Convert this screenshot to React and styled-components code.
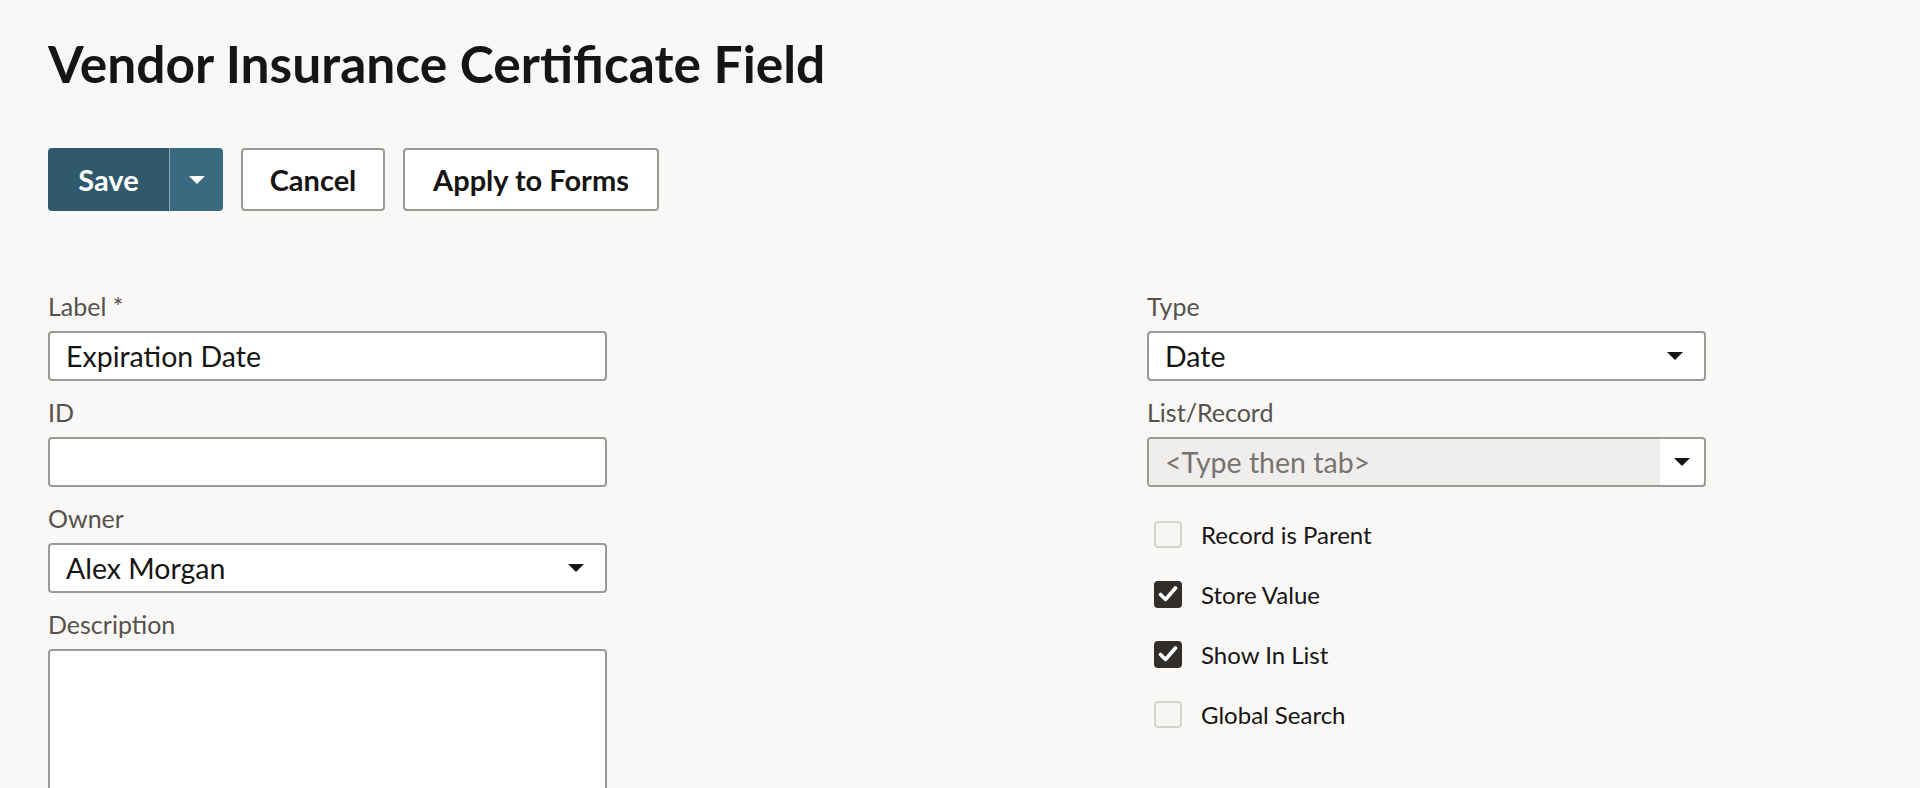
import React from 'react';
import styled, { createGlobalStyle } from 'styled-components';

const GlobalStyle = createGlobalStyle`
  body {
    margin: 0;
    background: #f9f8f6;
    font-family: Lato, "Noto Sans", sans-serif;
    color: #161513;
  }
`;

const Page = styled.div`
  padding: 33px 48px 0;
  height: 755px;
  overflow: hidden;
`;

const Title = styled.h1`
  margin: 0;
  font-size: 51.5px;
  line-height: 60px;
  font-weight: 700;
  color: #161513;
`;

const Toolbar = styled.div`
  display: flex;
  gap: 18px;
  margin-top: 55px;
`;

const SplitButton = styled.div`
  display: flex;
  height: 63px;
  border-radius: 4px;
  overflow: hidden;
`;

const PrimaryButton = styled.button`
  width: 121px;
  border: none;
  background: #305a6b;
  color: #ffffff;
  font-family: inherit;
  font-size: 29px;
  font-weight: 700;
  padding: 0;
  cursor: pointer;
`;

const MenuButton = styled.button`
  width: 54px;
  border: none;
  border-left: 1px solid #8aa5b1;
  background: #3a6a80;
  display: flex;
  align-items: center;
  justify-content: center;
  cursor: pointer;
`;

const Button = styled.button`
  width: ${p => p.$width}px;
  height: 63px;
  padding: 0;
  background: #ffffff;
  border: 2px solid #9d9a96;
  border-radius: 4px;
  font-family: inherit;
  font-size: 29px;
  font-weight: 700;
  color: #161513;
  cursor: pointer;
`;

const Form = styled.div`
  display: grid;
  grid-template-columns: 1099px 559px;
  margin-top: 80px;
`;

const Column = styled.div`
  display: flex;
  flex-direction: column;
  gap: 16px;
  width: 559px;
`;

const Field = styled.div`
  display: flex;
  flex-direction: column;
  gap: 10px;
`;

const Label = styled.label`
  font-size: 25px;
  line-height: 30px;
  color: #55524e;
`;

const Box = styled.div`
  box-sizing: border-box;
  height: ${p => p.$tall ? '160px' : '50px'};
  display: flex;
  align-items: center;
  background: #ffffff;
  border: 2px solid #9d9a96;
  border-radius: 4px;
  overflow: hidden;
`;

const Value = styled.div`
  flex: 1;
  align-self: stretch;
  display: flex;
  align-items: center;
  padding: 0 16px;
  font-size: 28.5px;
  color: ${p => p.$placeholder ? '#77736e' : '#161513'};
  background: ${p => p.$disabled ? '#efeeec' : 'transparent'};
`;

const Caret = styled.span`
  width: ${p => p.$wide ? '44px' : '58px'};
  display: flex;
  align-items: center;
  justify-content: center;
`;

const Checks = styled.div`
  display: flex;
  flex-direction: column;
  padding-left: 7px;
  margin-top: 1px;
`;

const CheckRow = styled.label`
  display: flex;
  align-items: center;
  gap: 19px;
  height: 60px;
  font-size: 24px;
  color: #161513;
`;

const CheckBox = styled.span`
  box-sizing: border-box;
  width: 28px;
  height: 27px;
  border-radius: 4px;
  display: flex;
  align-items: center;
  justify-content: center;
  background: ${p => p.$on ? '#312d2a' : '#f6f5f3'};
  border: 2px solid ${p => p.$on ? '#312d2a' : '#d6d3cf'};
`;

const Triangle = ({ color = '#161513' }) => (
  <svg width="16" height="8" viewBox="0 0 16 8">
    <path d="M0 0h16L8 8z" fill={color} />
  </svg>
);

const Tick = () => (
  <svg width="20" height="18" viewBox="0 0 20 18">
    <path d="M2.5 9.5l5 5L17.5 3" fill="none" stroke="#fff" strokeWidth="3.6" strokeLinecap="round" strokeLinejoin="round" />
  </svg>
);

const TextField = ({ label, value }) => (
  <Field>
    <Label>{label}</Label>
    <Box>
      <Value>{value}</Value>
    </Box>
  </Field>
);

const SelectField = ({ label, value, placeholder }) => (
  <Field>
    <Label>{label}</Label>
    <Box>
      <Value $placeholder={!!placeholder} $disabled={!!placeholder}>{value || placeholder}</Value>
      <Caret $wide={!!placeholder}><Triangle /></Caret>
    </Box>
  </Field>
);

const checks = [
  { label: 'Record is Parent', on: false },
  { label: 'Store Value', on: true },
  { label: 'Show In List', on: true },
  { label: 'Global Search', on: false },
];

export default function App() {
  return (
    <>
      <GlobalStyle />
      <Page>
        <Title>Vendor Insurance Certificate Field</Title>
        <Toolbar>
          <SplitButton>
            <PrimaryButton>Save</PrimaryButton>
            <MenuButton><Triangle color="#ffffff" /></MenuButton>
          </SplitButton>
          <Button $width={144}>Cancel</Button>
          <Button $width={256}>Apply to Forms</Button>
        </Toolbar>
        <Form>
          <Column>
            <TextField label="Label *" value="Expiration Date" />
            <TextField label="ID" value="" />
            <SelectField label="Owner" value="Alex Morgan" />
            <Field>
              <Label>Description</Label>
              <Box $tall />
            </Field>
          </Column>
          <Column>
            <SelectField label="Type" value="Date" />
            <SelectField label="List/Record" placeholder="<Type then tab>" />
            <Checks>
              {checks.map(c => (
                <CheckRow key={c.label}>
                  <CheckBox $on={c.on}>{c.on && <Tick />}</CheckBox>
                  {c.label}
                </CheckRow>
              ))}
            </Checks>
          </Column>
        </Form>
      </Page>
    </>
  );
}
